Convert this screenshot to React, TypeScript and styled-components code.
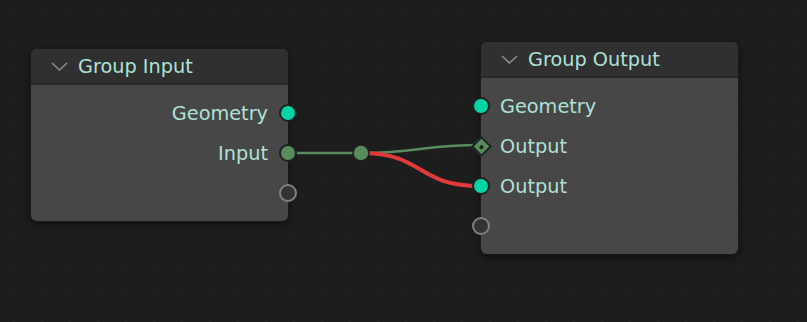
import styled, { createGlobalStyle } from 'styled-components';

const GlobalStyle = createGlobalStyle`
  html, body {
    margin: 0;
    padding: 0;
    background: #1d1d1d;
  }
  body {
    font-family: "DejaVu Sans", "Liberation Sans", sans-serif;
  }
`;

type SocketKind = 'geometry' | 'int' | 'empty' | 'diamond';

type Row = { label: string; socket: SocketKind };

const Canvas = styled.div`
  position: relative;
  width: 807px;
  height: 322px;
  overflow: hidden;
  background-color: #1d1d1d;
  background-image: radial-gradient(circle, #242424 1px, transparent 1.2px);
  background-size: 28px 28px;
`;

const Node = styled.div<{ $x: number; $y: number }>`
  position: absolute;
  left: ${(p) => p.$x}px;
  top: ${(p) => p.$y}px;
  width: 257px;
  display: flex;
  flex-direction: column;
  border-radius: 6px;
  background: #474747;
  box-shadow: 0 0 0 1px #1a1a1a, 0 3px 8px rgba(0, 0, 0, 0.6);
`;

const Header = styled.div`
  height: 34px;
  display: flex;
  align-items: center;
  gap: 10px;
  padding-left: 20px;
  background: #303030;
  border-radius: 6px 6px 0 0;
  border-bottom: 2px solid #282828;
  color: #aee0d6;
  font-size: 19.3px;
`;

const Chevron = () => (
  <svg width="17" height="9" viewBox="0 0 17 9">
    <path d="M1 1 L8.5 8 L16 1" fill="none" stroke="#8c8c8c" strokeWidth="1.6" />
  </svg>
);

const Body = styled.div`
  display: flex;
  flex-direction: column;
  padding: 8px 0 8px;
`;

const RowLine = styled.div<{ $side: 'left' | 'right' }>`
  position: relative;
  height: 40px;
  display: flex;
  align-items: center;
  justify-content: ${(p) => (p.$side === 'right' ? 'flex-end' : 'flex-start')};
  padding: 0 20px 0 19px;
  color: #aee0d6;
  font-size: 19.3px;
`;

const Socket = styled.span<{ $kind: SocketKind; $side: 'left' | 'right' }>`
  position: absolute;
  top: 50%;
  ${(p) => (p.$side === 'right' ? 'right: -9px;' : 'left: -9px;')}
  box-sizing: border-box;
  width: 18px;
  height: 18px;
  margin-top: -9px;
  border-radius: 50%;
  border: 2px solid #202020;
  background: ${(p) =>
    p.$kind === 'geometry' ? '#00d6a3' : p.$kind === 'int' ? '#598c5c' : '#333333'};
  ${(p) => p.$kind === 'empty' && 'border-color: #808080;'}
`;

const Diamond = styled.span<{ $side: 'left' | 'right' }>`
  position: absolute;
  top: 50%;
  ${(p) => (p.$side === 'right' ? 'right: -7.5px;' : 'left: -7.5px;')}
  box-sizing: border-box;
  width: 15px;
  height: 15px;
  margin-top: -7.5px;
  transform: rotate(45deg);
  background: #598c5c;
  border: 2px solid #202020;
  display: flex;
  align-items: center;
  justify-content: center;
  &::after {
    content: '';
    width: 4px;
    height: 4px;
    border-radius: 50%;
    background: #1e1e1e;
  }
`;

const Wires = styled.svg`
  position: absolute;
  left: 0;
  top: 0;
`;

const GraphNode = ({
  x,
  y,
  title,
  side,
  rows,
}: {
  x: number;
  y: number;
  title: string;
  side: 'left' | 'right';
  rows: Row[];
}) => (
  <Node $x={x} $y={y}>
    <Header>
      <Chevron />
      <span>{title}</span>
    </Header>
    <Body>
      {rows.map((r, i) => (
        <RowLine key={i} $side={side}>
          {r.label}
          {r.socket === 'diamond' ? (
            <Diamond $side={side} />
          ) : (
            <Socket $kind={r.socket} $side={side} />
          )}
        </RowLine>
      ))}
    </Body>
  </Node>
);

export default function App() {
  return (
    <>
      <GlobalStyle />
      <Canvas>
        <Wires width="807" height="322">
          <path d="M288 153 L361 153" stroke="#598c5c" strokeWidth="2.4" fill="none" />
          <path d="M361 153 C 420 153, 420 145, 481 145" stroke="#598c5c" strokeWidth="2.4" fill="none" />
          <path d="M361 153 C 425 153, 415 186, 481 186" stroke="#e23a3a" strokeWidth="4" fill="none" />
          <circle cx="361" cy="153" r="8" fill="#598c5c" stroke="#202020" strokeWidth="1.6" />
        </Wires>
        <GraphNode
          x={31}
          y={49}
          title="Group Input"
          side="right"
          rows={[
            { label: 'Geometry', socket: 'geometry' },
            { label: 'Input', socket: 'int' },
            { label: '', socket: 'empty' },
          ]}
        />
        <GraphNode
          x={481}
          y={42}
          title="Group Output"
          side="left"
          rows={[
            { label: 'Geometry', socket: 'geometry' },
            { label: 'Output', socket: 'diamond' },
            { label: 'Output', socket: 'geometry' },
            { label: '', socket: 'empty' },
          ]}
        />
      </Canvas>
    </>
  );
}
